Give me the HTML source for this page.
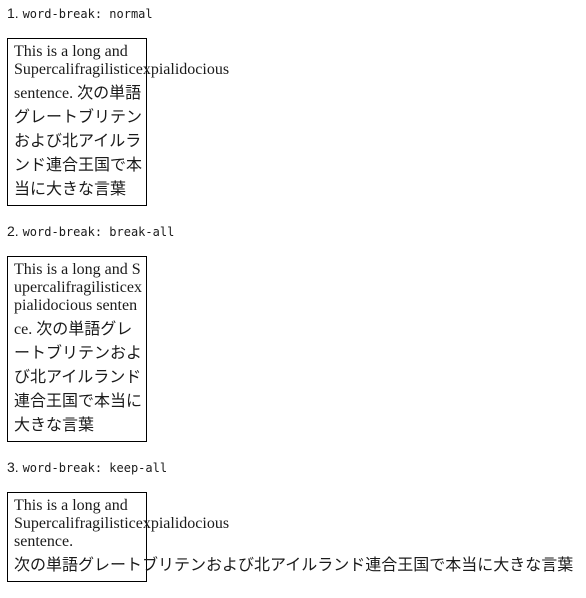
<!DOCTYPE html>
<html><head><meta charset="utf-8"><style>
body{margin:4px 8px 0 7px;font-family:"Liberation Serif","Noto Sans CJK JP",serif;font-size:16px;color:#1a1a1a;background:#fff}
.l{font-family:"Liberation Sans",sans-serif;font-size:14px;margin:0 0 16px 0;line-height:18px}
.l code{font-family:"DejaVu Sans Mono",monospace;font-size:12px}
.b{width:129px;border:1px solid #000;padding:4px 3px 6px 6px;margin:-1px 0 16px 0;line-height:normal}
.n{word-break:normal}.a{word-break:break-all}.k{word-break:keep-all}
</style></head><body>
<p class="l">1. <code>word-break: normal</code></p>
<p class="b n">This is a long and Supercalifragilisticexpialidocious sentence. 次の単語グレートブリテンおよび北アイルランド連合王国で本当に大きな言葉</p>
<p class="l">2. <code>word-break: break-all</code></p>
<p class="b a">This is a long and Supercalifragilisticexpialidocious sentence. 次の単語グレートブリテンおよび北アイルランド連合王国で本当に大きな言葉</p>
<p class="l">3. <code>word-break: keep-all</code></p>
<p class="b k">This is a long and Supercalifragilisticexpialidocious sentence. 次の単語グレートブリテンおよび北アイルランド連合王国で本当に大きな言葉</p>
</body></html>
